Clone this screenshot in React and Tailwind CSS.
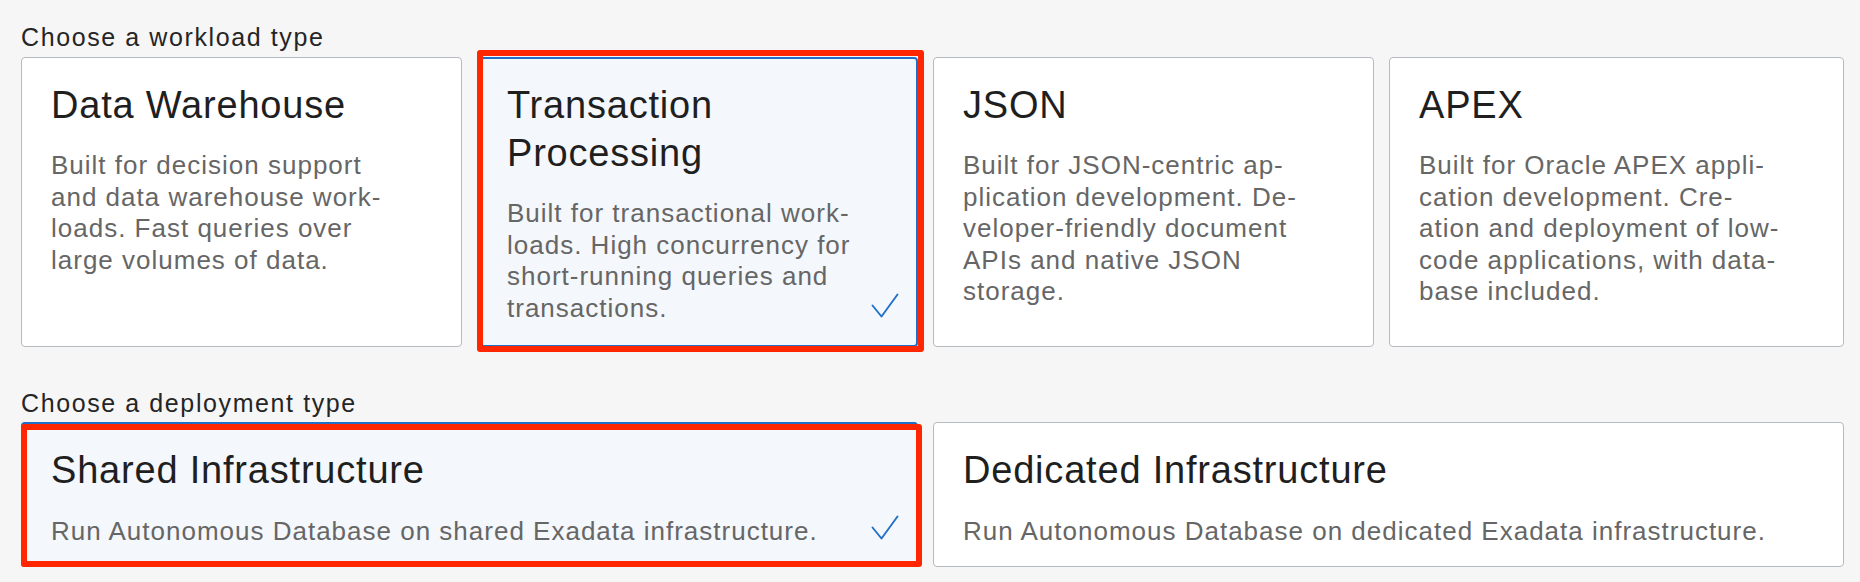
import React from "react";

function Check({ className }) {
  return (
    <svg
      className={className}
      width="28"
      height="25"
      viewBox="0 0 28 25"
      fill="none"
      stroke="#2170c9"
      strokeWidth="1.9"
      strokeLinecap="round"
      strokeLinejoin="round"
    >
      <path d="M1.5 12.5 L10.5 23.5 L26.5 1.5" />
    </svg>
  );
}

function Card({ title, lines, selected, width, bottom }) {
  const base = selected
    ? "border-2 border-[#1f6fc8] bg-[#f4f7fb] px-[28px]"
    : "border border-[#b6bac1] bg-white px-[29px]";
  const pt = selected ? "pt-[22px]" : "pt-[23px]";
  return (
    <div className={`relative shrink-0 rounded-[4px] ${base} ${pt} ${width} ${bottom ? "h-[145px]" : "h-[290px]"}`}>
      <div className="text-[38px] leading-[48px] tracking-[0.8px] text-[#1f1f1f] whitespace-nowrap">
        {title.map((t, i) => (
          <div key={i}>{t}</div>
        ))}
      </div>
      <div className={`${bottom ? "mt-[22px]" : "mt-[21px]"} text-[26px] leading-[31.5px] tracking-[1px] text-[#666666] whitespace-nowrap`}>
        {lines.map((l, i) => (
          <div key={i}>{l}</div>
        ))}
      </div>
      {selected && !bottom && (
        <>
          <Check className="absolute right-[17px] bottom-[27px]" />
          <div className="pointer-events-none absolute -left-[2px] -top-[9px] -right-[8px] -bottom-[7px] rounded-[3px] border-[6px] border-[#ff2600]" />
        </>
      )}
      {selected && bottom && (
        <>
          <Check className="absolute right-[17px] bottom-[25px]" />
          <div className="pointer-events-none absolute -left-[2px] top-0 -right-[6px] -bottom-[2px] rounded-[3px] border-[6px] border-[#ff2600]" />
        </>
      )}
    </div>
  );
}

export default function App() {
  return (
    <div className="w-[1860px] h-[582px] overflow-hidden bg-[#f6f6f6] pl-[21px] pt-[23px] font-['Liberation_Sans',Arial,sans-serif]">
      <div className="text-[25px] leading-[28px] tracking-[1.6px] text-[#252525]">Choose a workload type</div>
      <div className="mt-[6px] flex gap-[15px]">
        <Card
          width="w-[441px]"
          title={["Data Warehouse"]}
          lines={[
            "Built for decision support",
            "and data warehouse work-",
            "loads. Fast queries over",
            "large volumes of data.",
          ]}
        />
        <Card
          selected
          width="w-[441px]"
          title={["Transaction", "Processing"]}
          lines={[
            "Built for transactional work-",
            "loads. High concurrency for",
            "short-running queries and",
            "transactions.",
          ]}
        />
        <Card
          width="w-[441px]"
          title={["JSON"]}
          lines={[
            "Built for JSON-centric ap-",
            "plication development. De-",
            "veloper-friendly document",
            "APIs and native JSON",
            "storage.",
          ]}
        />
        <Card
          width="w-[455px]"
          title={["APEX"]}
          lines={[
            "Built for Oracle APEX appli-",
            "cation development. Cre-",
            "ation and deployment of low-",
            "code applications, with data-",
            "base included.",
          ]}
        />
      </div>
      <div className="mt-[42px] text-[25px] leading-[28px] tracking-[1.6px] text-[#252525]">Choose a deployment type</div>
      <div className="mt-[5px] flex gap-[15px]">
        <Card
          selected
          bottom
          width="w-[897px]"
          title={["Shared Infrastructure"]}
          lines={["Run Autonomous Database on shared Exadata infrastructure."]}
        />
        <Card
          bottom
          width="w-[911px]"
          title={["Dedicated Infrastructure"]}
          lines={["Run Autonomous Database on dedicated Exadata infrastructure."]}
        />
      </div>
    </div>
  );
}
